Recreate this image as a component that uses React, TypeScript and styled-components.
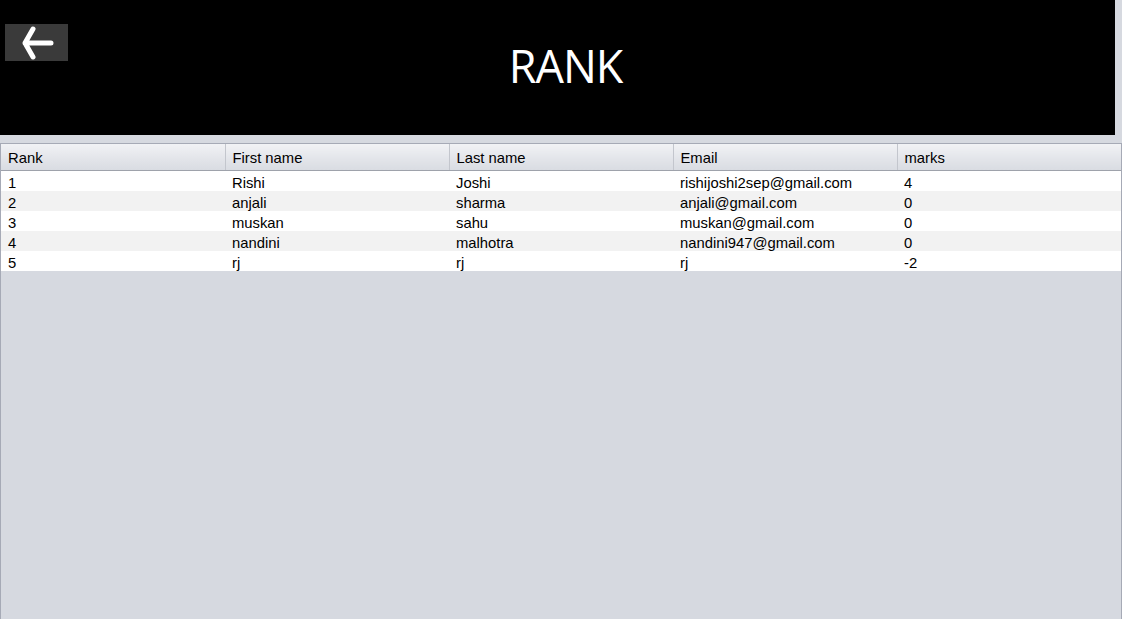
import styled, { createGlobalStyle } from "styled-components";

type Student = {
  rank: number;
  firstName: string;
  lastName: string;
  email: string;
  marks: number;
};

const students: Student[] = [
  { rank: 1, firstName: "Rishi", lastName: "Joshi", email: "rishijoshi2sep@gmail.com", marks: 4 },
  { rank: 2, firstName: "anjali", lastName: "sharma", email: "anjali@gmail.com", marks: 0 },
  { rank: 3, firstName: "muskan", lastName: "sahu", email: "muskan@gmail.com", marks: 0 },
  { rank: 4, firstName: "nandini", lastName: "malhotra", email: "nandini947@gmail.com", marks: 0 },
  { rank: 5, firstName: "rj", lastName: "rj", email: "rj", marks: -2 },
];

const columns = ["Rank", "First name", "Last name", "Email", "marks"];

const App = () => {
  return (
    <>
      <GlobalStyle />
      <Page>
        <TopBar>
          <BackButton aria-label="back">
            <svg width="34" height="36" viewBox="0 0 34 36">
              <path
                d="M11 4 L3 18 L11 32 M3 18 L29 18"
                fill="none"
                stroke="#fff"
                strokeWidth="5"
                strokeLinecap="round"
                strokeLinejoin="round"
              />
            </svg>
          </BackButton>
          <Title>RANK</Title>
        </TopBar>
        <ScrollPane>
          <RankTable>
            <thead>
              <tr>
                {columns.map((c) => (
                  <HeaderCell key={c}>{c}</HeaderCell>
                ))}
              </tr>
            </thead>
            <tbody>
              {students.map((s, i) => (
                <Row key={s.rank} $striped={i % 2 === 1}>
                  <Cell>{s.rank}</Cell>
                  <Cell>{s.firstName}</Cell>
                  <Cell>{s.lastName}</Cell>
                  <Cell>{s.email}</Cell>
                  <Cell>{s.marks}</Cell>
                </Row>
              ))}
            </tbody>
          </RankTable>
        </ScrollPane>
      </Page>
    </>
  );
};

const GlobalStyle = createGlobalStyle`
  html, body {
    margin: 0;
    padding: 0;
    background: #d6d9e0;
  }
  body {
    font-family: "Liberation Sans", Arial, sans-serif;
  }
`;

const Page = styled.div`
  width: 1122px;
  height: 619px;
  display: flex;
  flex-direction: column;
  gap: 8px;
  overflow: hidden;
  background: #d6d9e0;
`;

const TopBar = styled.header`
  position: relative;
  width: 1115px;
  height: 135px;
  flex-shrink: 0;
  background: #000;
  display: flex;
  justify-content: center;
  align-items: flex-start;
`;

const BackButton = styled.button`
  position: absolute;
  left: 5px;
  top: 24px;
  width: 63px;
  height: 37px;
  padding: 0 0 0 17px;
  border: none;
  background: #3a3a3a;
  display: flex;
  align-items: center;
  cursor: pointer;
  svg {
    display: block;
  }
`;

const Title = styled.h1`
  margin: 36px 0 0 16px;
  color: #fff;
  font-family: "Open Sans", "Noto Sans", sans-serif;
  font-weight: 400;
  font-size: 45px;
  line-height: 60px;
  letter-spacing: -1px;
`;

const ScrollPane = styled.div`
  flex: 1;
  border: 1px solid #a6aab6;
  border-bottom: none;
  background: #d6d9e0;
`;

const RankTable = styled.table`
  width: 100%;
  border-collapse: collapse;
  table-layout: fixed;
  font-family: "Liberation Sans", Arial, sans-serif;
  font-size: 14.8px;
  color: #000;
`;

const HeaderCell = styled.th`
  height: 24px;
  padding: 2px 0 0 7px;
  line-height: 24px;
  text-align: left;
  font-weight: 400;
  background: linear-gradient(#f1f2f5, #e2e4e9 60%, #d9dce2);
  border-left: 1px solid #c3c6cd;
  border-bottom: 1px solid #9ea2ab;
  &:first-child {
    border-left: none;
  }
`;

const Row = styled.tr<{ $striped: boolean }>`
  background: ${(p) => (p.$striped ? "#f2f2f2" : "#ffffff")};
`;

const Cell = styled.td`
  height: 16px;
  padding: 4px 0 0 7px;
  line-height: 16px;
  white-space: nowrap;
`;

export default App;
